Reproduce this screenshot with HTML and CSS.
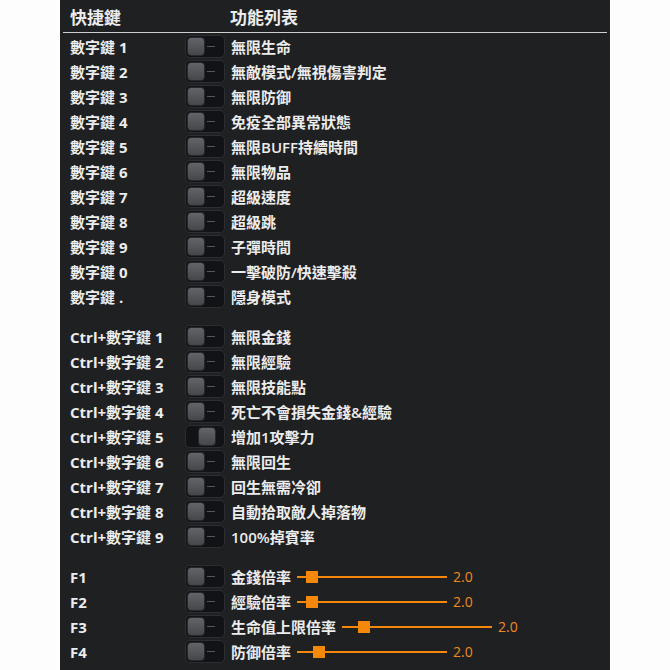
FILE: index.html
```html
<!DOCTYPE html>
<html lang="zh-Hant">
<head>
    <meta charset="UTF-8">
    <title>功能列表</title>
    <link rel="stylesheet" href="styles.css">
</head>
<body>

<div class="panel">
    <div class="header">
        <span class="key">快捷鍵</span>
        <span class="func">功能列表</span>
    </div>

    <div class="group">
        <div class="row"><span class="key">數字鍵 1</span><span class="toggle"><i></i></span><span class="label">無限生命</span></div>
        <div class="row"><span class="key">數字鍵 2</span><span class="toggle"><i></i></span><span class="label">無敵模式/無視傷害判定</span></div>
        <div class="row"><span class="key">數字鍵 3</span><span class="toggle"><i></i></span><span class="label">無限防御</span></div>
        <div class="row"><span class="key">數字鍵 4</span><span class="toggle"><i></i></span><span class="label">免疫全部異常狀態</span></div>
        <div class="row"><span class="key">數字鍵 5</span><span class="toggle"><i></i></span><span class="label">無限BUFF持續時間</span></div>
        <div class="row"><span class="key">數字鍵 6</span><span class="toggle"><i></i></span><span class="label">無限物品</span></div>
        <div class="row"><span class="key">數字鍵 7</span><span class="toggle"><i></i></span><span class="label">超級速度</span></div>
        <div class="row"><span class="key">數字鍵 8</span><span class="toggle"><i></i></span><span class="label">超級跳</span></div>
        <div class="row"><span class="key">數字鍵 9</span><span class="toggle"><i></i></span><span class="label">子彈時間</span></div>
        <div class="row"><span class="key">數字鍵 0</span><span class="toggle"><i></i></span><span class="label">一擊破防/快速擊殺</span></div>
        <div class="row"><span class="key">數字鍵 .</span><span class="toggle"><i></i></span><span class="label">隱身模式</span></div>
    </div>

    <div class="group">
        <div class="row"><span class="key">Ctrl+數字鍵 1</span><span class="toggle"><i></i></span><span class="label">無限金錢</span></div>
        <div class="row"><span class="key">Ctrl+數字鍵 2</span><span class="toggle"><i></i></span><span class="label">無限經驗</span></div>
        <div class="row"><span class="key">Ctrl+數字鍵 3</span><span class="toggle"><i></i></span><span class="label">無限技能點</span></div>
        <div class="row"><span class="key">Ctrl+數字鍵 4</span><span class="toggle"><i></i></span><span class="label">死亡不會損失金錢&amp;經驗</span></div>
        <div class="row"><span class="key">Ctrl+數字鍵 5</span><span class="toggle on"><i></i></span><span class="label">增加1攻擊力</span></div>
        <div class="row"><span class="key">Ctrl+數字鍵 6</span><span class="toggle"><i></i></span><span class="label">無限回生</span></div>
        <div class="row"><span class="key">Ctrl+數字鍵 7</span><span class="toggle"><i></i></span><span class="label">回生無需冷卻</span></div>
        <div class="row"><span class="key">Ctrl+數字鍵 8</span><span class="toggle"><i></i></span><span class="label">自動拾取敵人掉落物</span></div>
        <div class="row"><span class="key">Ctrl+數字鍵 9</span><span class="toggle"><i></i></span><span class="label">100%掉賓率</span></div>
    </div>

    <div class="group">
        <div class="row">
            <span class="key">F1</span><span class="toggle"><i></i></span><span class="label">金錢倍率</span>
            <span class="slider"><b style="left: 9px"></b></span><span class="value">2.0</span>
        </div>
        <div class="row">
            <span class="key">F2</span><span class="toggle"><i></i></span><span class="label">經驗倍率</span>
            <span class="slider"><b style="left: 9px"></b></span><span class="value">2.0</span>
        </div>
        <div class="row">
            <span class="key">F3</span><span class="toggle"><i></i></span><span class="label">生命值上限倍率</span>
            <span class="slider"><b style="left: 16px"></b></span><span class="value">2.0</span>
        </div>
        <div class="row">
            <span class="key">F4</span><span class="toggle"><i></i></span><span class="label">防御倍率</span>
            <span class="slider"><b style="left: 16px"></b></span><span class="value">2.0</span>
        </div>
    </div>
</div>

</body>
</html>
```

FILE: styles.css
```css
body {
    margin: 0;
    background-color: #fdfdfd;
    font-family: "Open Sans", "Noto Sans CJK TC", sans-serif;
    color: #ececec;
}

.panel {
    margin-left: 60px;
    width: 550px;
    height: 670px;
    background-color: #1f2022;
    overflow: hidden;
}

.header {
    display: flex;
    align-items: center;
    height: 32px;
    margin: 0 3px;
    padding-left: 7px;
    border-bottom: 1px solid #cfcfcf;
    font-size: 17px;
    font-weight: 700;
}

.header .key {
    width: 160px;
}

.group {
    padding-top: 1px;
    margin-bottom: 14px;
}

.row {
    display: flex;
    align-items: center;
    height: 25px;
    padding-left: 10px;
    font-size: 15px;
}

.key {
    width: 115px;
    font-weight: 700;
}

.toggle {
    position: relative;
    width: 40px;
    height: 23px;
    box-sizing: border-box;
    background-color: #121317;
    border: 1px solid #2d2e33;
    border-radius: 5px;
}

.toggle i {
    position: absolute;
    left: 1px;
    top: 1px;
    width: 18px;
    height: 19px;
    box-sizing: border-box;
    border-radius: 4px;
    border: 1px solid #28292c;
    background: linear-gradient(#636469, #46474b);
}

.toggle i::after {
    content: "";
    position: absolute;
    left: 19px;
    top: 8px;
    width: 8px;
    height: 1px;
    background-color: #55565b;
}

.toggle.on i {
    left: 12px;
}

.toggle.on i::after {
    display: none;
}

.label {
    margin-left: 6px;
    font-weight: 600;
}

.slider {
    position: relative;
    width: 150px;
    height: 2px;
    margin-left: 6px;
    background-color: #f5870b;
}

.slider b {
    position: absolute;
    top: -5px;
    width: 12px;
    height: 12px;
    background-color: #f5870b;
}

.value {
    margin-left: 6px;
    font-size: 14px;
    color: #f08a1c;
}
```
